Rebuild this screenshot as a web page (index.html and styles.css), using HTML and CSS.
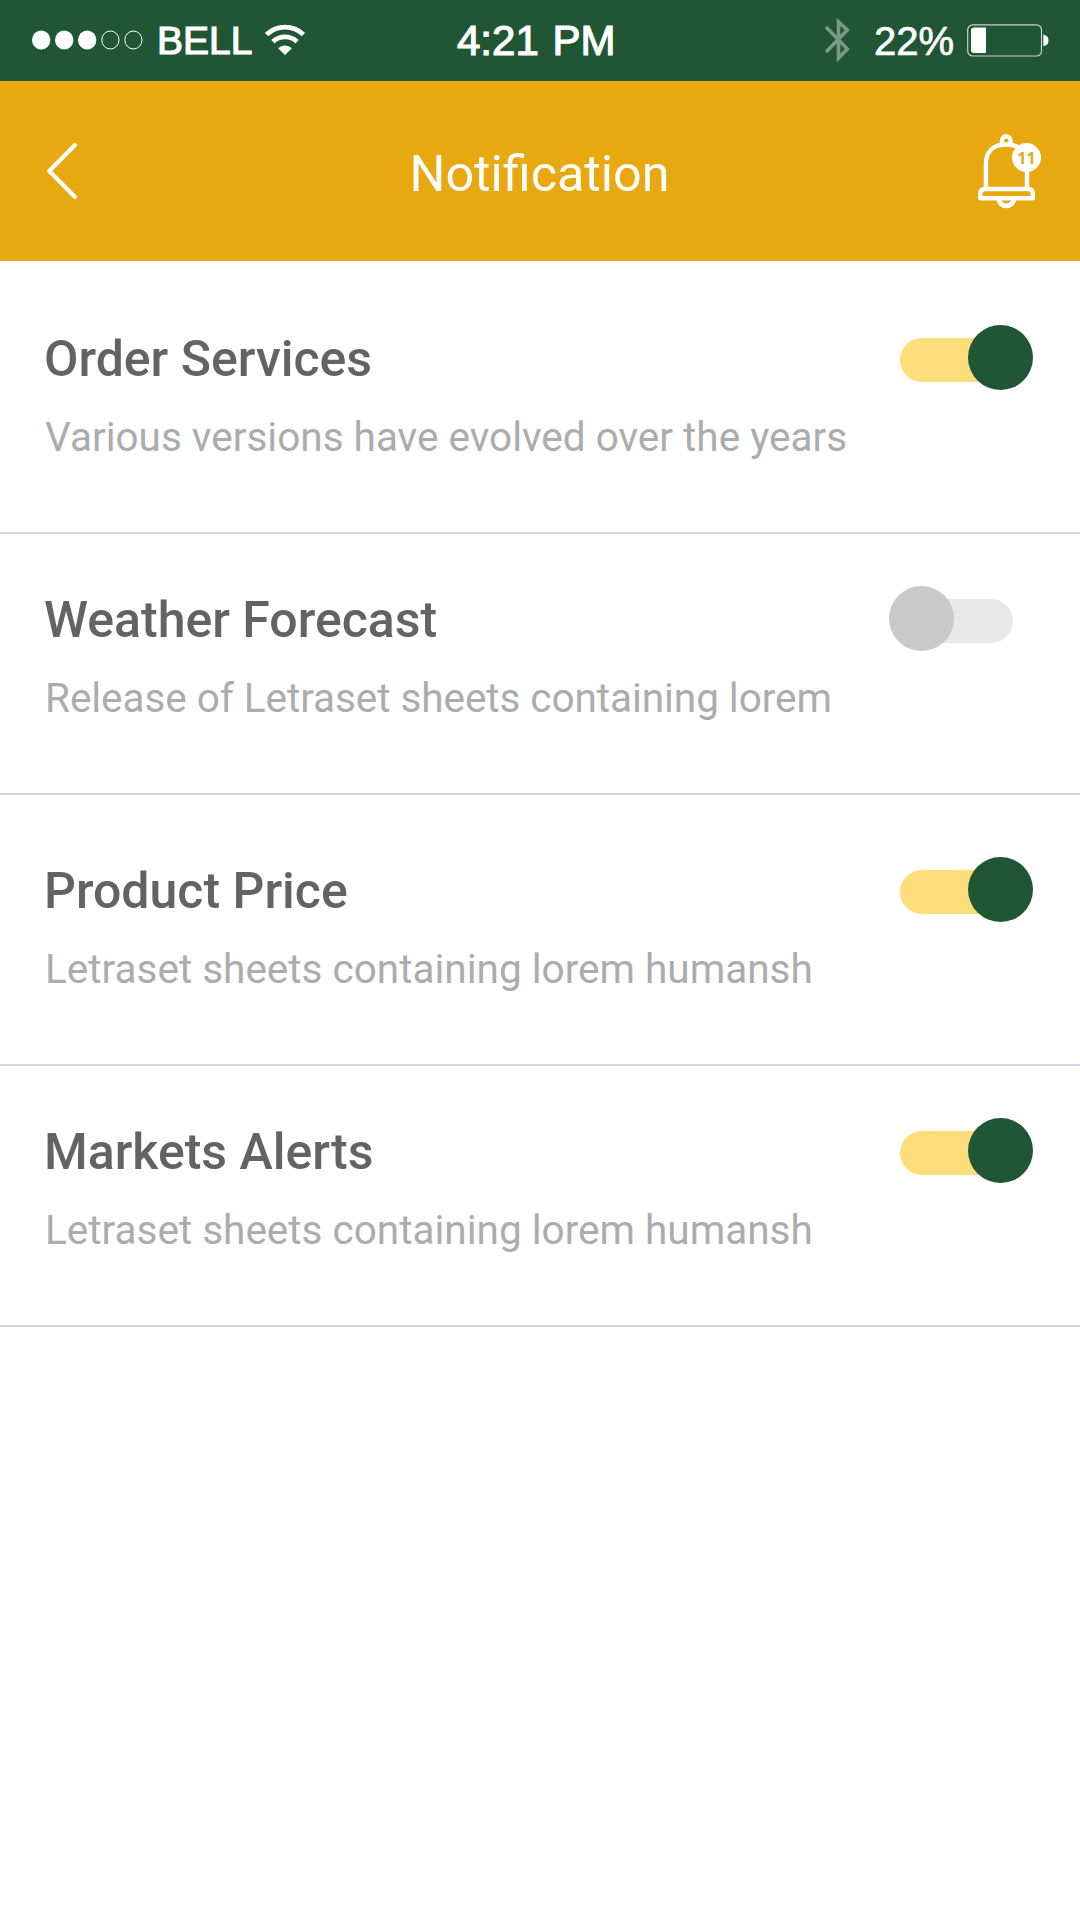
FILE: index.html
```html
<!DOCTYPE html>
<html lang="en">
<head>
<meta charset="utf-8">
<title>Notification</title>
<link rel="stylesheet" href="styles.css">
</head>
<body>
<header class="status">
  <div class="status-left">
    <svg class="signal" width="112" height="20" viewBox="0 0 112 20" fill="#fff"><ellipse cx="9.2" cy="10" rx="9.2" ry="9.6"/><ellipse cx="32.2" cy="10" rx="9.2" ry="9.6"/><ellipse cx="55.2" cy="10" rx="9.2" ry="9.6"/><g fill="none" stroke="#fff"><ellipse cx="78.4" cy="10" rx="8.6" ry="9"/><ellipse cx="101.4" cy="10" rx="8.6" ry="9"/></g></svg>
    <span class="carrier">BELL</span>
    <svg class="wifi" width="40" height="32" viewBox="0 0 40 32"><g fill="none" stroke="#fff" stroke-width="4.8"><path d="M1.6 10.6A26.5 26.5 0 0 1 38.4 10.6"/><path d="M7.9 17.8A17.5 17.5 0 0 1 32.1 17.8"/></g><path d="M20 31L13.1 24.3A10 10 0 0 1 26.9 24.3Z" fill="#fff"/></svg>
  </div>
  <span class="clock">4:21 PM</span>
  <div class="status-right">
    <svg class="bluetooth" width="26" height="46" viewBox="0 0 26 46" fill="none" stroke="#7b9a86" stroke-width="3.6"><path d="M1 10L22.3 32L13.5 41V4.8L22.3 13L1 35"/></svg>
    <span class="percent">22%</span>
    <svg class="battery" width="82" height="33" viewBox="0 0 82 33"><rect x=".7" y=".8" width="73.8" height="31.2" rx="5" fill="none" stroke="#c4d2c9" stroke-width="1.2"/><path d="M7 3.5H19V29H7Q4 29 4 26V6.5Q4 3.5 7 3.5Z" fill="#fff"/><path d="M76.3 10.5Q81.5 11.5 81.5 16.5T76.3 22Z" fill="#fff"/></svg>
  </div>
</header>
<nav class="bar">
  <svg class="back" width="32" height="58" viewBox="0 0 32 58" fill="none" stroke="#fff" stroke-width="4.2" stroke-linecap="round" stroke-linejoin="round"><path d="M29 3L3.2 29L29 55"/></svg>
  <h1 class="heading">Notification</h1>
  <div class="alerts">
    <svg width="64" height="76" viewBox="0 0 64 76" fill="none" stroke="#fff" stroke-width="4.4"><path d="M24 10V7.5A4.3 4.3 0 0 1 32.6 7.5V10"/><path d="M7.9 54V31C7.9 18 16 11.5 28.3 11.5S49 18 49 31V54"/><path d="M2.2 65.3V61Q2.2 56 7 56H50Q54.8 56 54.8 61V65.3Z" stroke-linejoin="round"/><path d="M20.6 65.5A7.7 7.4 0 0 0 36 65.5" stroke-width="4.8"/></svg>
    <span class="badge">11</span>
  </div>
</nav>
<main class="list">
  <section class="item item-first">
    <div class="copy"><h2 class="title">Order Services</h2><p class="desc">Various versions have evolved over the years</p></div>
    <div class="toggle on"></div>
  </section>
  <section class="item item-second">
    <div class="copy"><h2 class="title">Weather Forecast</h2><p class="desc">Release of Letraset sheets containing lorem</p></div>
    <div class="toggle off"></div>
  </section>
  <section class="item item-third">
    <div class="copy"><h2 class="title">Product Price</h2><p class="desc">Letraset sheets containing lorem humansh</p></div>
    <div class="toggle on"></div>
  </section>
  <section class="item">
    <div class="copy"><h2 class="title">Markets Alerts</h2><p class="desc">Letraset sheets containing lorem humansh</p></div>
    <div class="toggle on"></div>
  </section>
</main>
</body>
</html>
```
FILE: styles.css
```css
* { box-sizing: border-box; }
body { margin: 0; background: #fff; font-family: Roboto, sans-serif; }
h1, h2, p { margin: 0; font-weight: 400; }
svg { display: block; flex: none; }
.status { height: 81px; background: #205634; color: #fff; display: grid; grid-template-columns: 457px auto 1fr; font-family: "Liberation Sans", sans-serif; white-space: nowrap; }
.status-left, .status-right { display: flex; align-items: flex-start; }
.signal { margin: 30px 0 0 31.5px; }
.carrier { margin: 18px 0 0 13.5px; font-size: 39px; line-height: 46px; -webkit-text-stroke: 1.2px #fff; }
.wifi { margin: 24px 0 0 12.5px; }
.clock { margin-top: 17px; font-size: 42px; line-height: 48px; word-spacing: 2px; -webkit-text-stroke: 1.2px #fff; }
.status-right { justify-content: flex-end; padding-right: 31px; }
.bluetooth { margin-top: 17px; }
.percent { margin: 18px 13px 0 23px; font-size: 40px; line-height: 46px; -webkit-text-stroke: 0.7px #fff; }
.battery { margin-top: 24px; }
.bar { height: 180px; background: #e8a80f; color: #fff; display: flex; padding: 0 38px 0 46px; }
.back { margin-top: 61px; }
.heading { flex: 1; margin-top: 63px; padding-left: 23px; font-size: 50.3px; line-height: 60px; text-align: center; }
.alerts { position: relative; width: 64px; margin-top: 52px; }
.badge { position: absolute; left: 34px; top: 10px; width: 29px; height: 29px; border-radius: 50%; background: #fff; color: #e8a80f; font: 700 16px/31px "Open Sans", sans-serif; text-align: center; }
.item { display: flex; justify-content: space-between; height: 261px; padding: 50px 47px 0 45px; border-bottom: 2px solid #d8d5ea; }
.item-first { height: 273px; padding-top: 62px; }
.item-third { height: 271px; padding-top: 60px; }
.copy { padding-top: 6px; }
.title { margin-left: -1px; font-size: 50px; line-height: 60px; font-weight: 500; color: #636363; }
.desc { margin-top: 23px; font-size: 40.5px; line-height: 50px; color: #acacac; white-space: nowrap; }
.item-second .desc { letter-spacing: -0.06px; }
.toggle { position: relative; width: 133px; height: 65px; margin-top: 2px; }
.toggle::before, .toggle::after { content: ""; position: absolute; }
.toggle::before { left: 0; top: 13px; width: 113px; height: 44px; border-radius: 22px; background: #ffdd7a; }
.toggle::after { right: 0; top: 0; width: 65px; height: 65px; border-radius: 50%; background: #205634; }
.toggle.off::before { background: #e8e8e8; }
.toggle.off::after { right: auto; left: -11px; background: #c9c9c9; }
```
